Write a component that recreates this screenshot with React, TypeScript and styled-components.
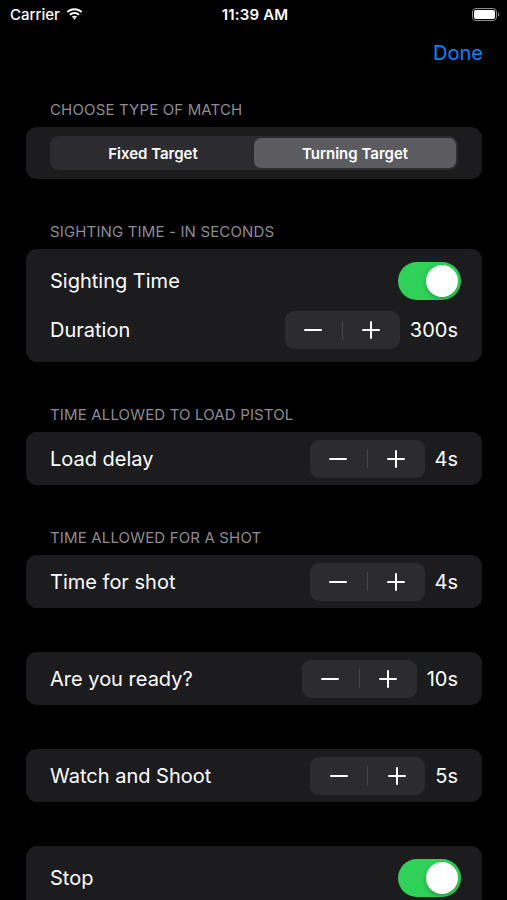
import React from "react"
import styled, { createGlobalStyle } from "styled-components"

const GlobalStyle = createGlobalStyle`
  html, body {
    margin: 0;
    padding: 0;
    background: #000;
  }
  body {
    font-family: Inter, "Liberation Sans", sans-serif;
    color: #fff;
    -webkit-font-smoothing: antialiased;
  }
`

const Screen = styled.div`
  width: 507px;
  height: 900px;
  overflow: hidden;
  background: #000;
`

const StatusBar = styled.div`
  height: 28px;
  display: grid;
  grid-template-columns: 1fr auto 1fr;
  align-items: center;
  padding: 0 7px 0 10px;
  font-size: 15px;
`

const Carrier = styled.div`
  display: flex;
  align-items: center;
  gap: 6px;
  color: #fff;
  font-weight: 500;
`

const Clock = styled.div`
  font-weight: 600;
  letter-spacing: 0.2px;
`

const BatteryWrap = styled.div`
  display: flex;
  justify-content: flex-end;
`

const NavBar = styled.div`
  height: 50px;
  display: flex;
  align-items: center;
  justify-content: flex-end;
  padding-right: 24px;
`

const DoneButton = styled.span`
  color: #0a84ff;
  font-size: 20px;
  font-weight: 400;
`

const List = styled.div`
  padding: 23px 25px 0 26px;
  display: flex;
  flex-direction: column;
  gap: 44px;
`

const Section = styled.div`
  display: flex;
  flex-direction: column;
`

const SectionHeader = styled.div`
  font-size: 15px;
  line-height: 18px;
  color: #8d8d93;
  text-transform: uppercase;
  padding-left: 24px;
  margin-bottom: 8px;
  letter-spacing: 0.15px;
`

const Card = styled.div<{ $pad: number }>`
  background: #1c1c1e;
  border-radius: 11px;
  padding: ${(p) => p.$pad}px 24px;
  display: flex;
  flex-direction: column;
`

const Row = styled.div`
  height: 49px;
  display: flex;
  align-items: center;
  justify-content: space-between;
`

const Label = styled.span`
  font-size: 20px;
  color: #fff;
`

const Controls = styled.div`
  display: flex;
  align-items: center;
  gap: 10px;
`

const Value = styled.span`
  font-size: 20px;
  color: #fff;
`

const Segmented = styled.div`
  display: grid;
  grid-template-columns: 1fr 1fr;
  height: 34px;
  background: #2c2c30;
  border-radius: 9px;
  padding: 2px;
  box-sizing: border-box;
`

const Segment = styled.div<{ $active?: boolean }>`
  display: flex;
  align-items: center;
  justify-content: center;
  border-radius: 7px;
  font-size: 15px;
  font-weight: 600;
  color: #fff;
  background: ${(p) => (p.$active ? "#5c5c60" : "transparent")};
`

const Stepper = styled.div`
  width: 115px;
  height: 38px;
  border-radius: 9px;
  background: #2c2c2e;
  display: grid;
  grid-template-columns: 1fr auto 1fr;
  align-items: center;
`

const StepButton = styled.div`
  display: flex;
  align-items: center;
  justify-content: center;
`

const Divider = styled.div`
  width: 1px;
  height: 19px;
  background: #48484a;
`

const Toggle = styled.div<{ $on: boolean }>`
  width: 63px;
  height: 38px;
  margin-right: -3px;
  border-radius: 19px;
  background: ${(p) => (p.$on ? "#30d158" : "#39393d")};
  padding: 3px;
  box-sizing: border-box;
  display: flex;
  justify-content: ${(p) => (p.$on ? "flex-end" : "flex-start")};
`

const Knob = styled.div`
  width: 32px;
  height: 32px;
  border-radius: 50%;
  background: #fff;
  box-shadow: 0 2px 5px rgba(0, 0, 0, 0.25);
`

const Wifi = () => (
  <svg width="17" height="13" viewBox="0 0 17 13">
    <path d="M8.5 2.2c2.5 0 4.8 1 6.5 2.6l1.3-1.4C14.3 1.5 11.5.3 8.5.3S2.7 1.5.7 3.4L2 4.8c1.7-1.6 4-2.6 6.5-2.6z" fill="#fff" />
    <path d="M8.5 5.9c1.5 0 2.9.6 3.9 1.5l1.3-1.4C12.3 4.7 10.5 4 8.5 4S4.7 4.7 3.3 6l1.3 1.4c1-.9 2.4-1.5 3.9-1.5z" fill="#fff" />
    <path d="M8.5 9.5c.6 0 1.1.2 1.5.6l-1.5 1.7L7 10.1c.4-.4.9-.6 1.5-.6z" fill="#fff" />
    <path d="M8.5 7.7c1 0 1.9.4 2.6 1l-1.1 1.2c-.4-.4-.9-.6-1.5-.6s-1.1.2-1.5.6L5.9 8.7c.7-.6 1.6-1 2.6-1z" fill="#fff" />
  </svg>
)

const Battery = () => (
  <svg width="28" height="13" viewBox="0 0 28 13">
    <rect x="0.5" y="0.5" width="24" height="12" rx="3.5" fill="none" stroke="#8e8e93" />
    <rect x="2" y="2" width="21" height="9" rx="2" fill="#fff" />
    <path d="M26 4.5v4c.8-.3 1.3-1.1 1.3-2s-.5-1.7-1.3-2z" fill="#8e8e93" />
  </svg>
)

const Minus = () => (
  <svg width="18" height="18" viewBox="0 0 18 18">
    <path d="M1 9h16" stroke="#fff" strokeWidth="2" strokeLinecap="round" />
  </svg>
)

const Plus = () => (
  <svg width="18" height="18" viewBox="0 0 18 18">
    <path d="M1 9h16M9 1v16" stroke="#fff" strokeWidth="2" strokeLinecap="round" />
  </svg>
)

const StepperControl = ({ value }: { value: string }) => (
  <Controls>
    <Stepper>
      <StepButton>
        <Minus />
      </StepButton>
      <Divider />
      <StepButton>
        <Plus />
      </StepButton>
    </Stepper>
    <Value>{value}</Value>
  </Controls>
)

const StepRow = ({ label, value }: { label: string; value: string }) => (
  <Row>
    <Label>{label}</Label>
    <StepperControl value={value} />
  </Row>
)

const ToggleRow = ({ label }: { label: string }) => (
  <Row>
    <Label>{label}</Label>
    <Toggle $on>
      <Knob />
    </Toggle>
  </Row>
)

export default function App() {
  return (
    <Screen>
      <GlobalStyle />
      <StatusBar>
        <Carrier>
          Carrier <Wifi />
        </Carrier>
        <Clock>11:39 AM</Clock>
        <BatteryWrap>
          <Battery />
        </BatteryWrap>
      </StatusBar>
      <NavBar>
        <DoneButton>Done</DoneButton>
      </NavBar>
      <List>
        <Section>
          <SectionHeader>Choose type of match</SectionHeader>
          <Card $pad={9}>
            <Segmented>
              <Segment>Fixed Target</Segment>
              <Segment $active>Turning Target</Segment>
            </Segmented>
          </Card>
        </Section>
        <Section>
          <SectionHeader>Sighting time - in seconds</SectionHeader>
          <Card $pad={7.5}>
            <ToggleRow label="Sighting Time" />
            <StepRow label="Duration" value="300s" />
          </Card>
        </Section>
        <Section>
          <SectionHeader>Time allowed to load pistol</SectionHeader>
          <Card $pad={2}>
            <StepRow label="Load delay" value="4s" />
          </Card>
        </Section>
        <Section>
          <SectionHeader>Time allowed for a shot</SectionHeader>
          <Card $pad={2}>
            <StepRow label="Time for shot" value="4s" />
          </Card>
        </Section>
        <Section>
          <Card $pad={2}>
            <StepRow label="Are you ready?" value="10s" />
          </Card>
        </Section>
        <Section>
          <Card $pad={2}>
            <StepRow label="Watch and Shoot" value="5s" />
          </Card>
        </Section>
        <Section>
          <Card $pad={7.5}>
            <ToggleRow label="Stop" />
          </Card>
        </Section>
      </List>
    </Screen>
  )
}
